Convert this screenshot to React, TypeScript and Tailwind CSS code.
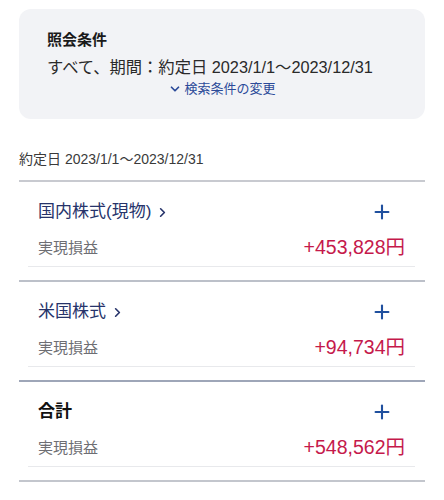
import { ChevronDown, ChevronRight, Plus } from 'lucide-react';

interface Section {
  title: string;
  link: boolean;
  value: string;
  lineColor: string;
}

const SECTIONS: Section[] = [
  { title: '国内株式(現物)', link: true, value: '+453,828円', lineColor: 'bg-[#bcc0c9]' },
  { title: '米国株式', link: true, value: '+94,734円', lineColor: 'bg-[#9ea6b8]' },
  { title: '合計', link: false, value: '+548,562円', lineColor: 'bg-[#c3c6cd]' },
];

function ResultSection({ section }: { section: Section }) {
  return (
    <div>
      <div className="pt-[15px] pb-[13px]">
        <div className="flex h-[30px] items-center justify-between pl-[19px] pr-[32px]">
          {section.link ? (
            <div className="flex items-center gap-[4px] text-[17px] text-[#26336a]">
              <span>{section.title}</span>
              <ChevronRight className="h-[15px] w-[15px]" strokeWidth={2.6} />
            </div>
          ) : (
            <div className="text-[17px] font-bold text-[#111111]">{section.title}</div>
          )}
          <Plus className="h-[22px] w-[22px] text-[#1f4f9e]" strokeWidth={2.3} />
        </div>
        <div className="mt-[6px] flex h-[30px] items-center justify-between pl-[19px] pr-[20px]">
          <span className="text-[15px] text-[#6e6e73]">実現損益</span>
          <span className="text-[19.5px] text-[#c5194b]">{section.value}</span>
        </div>
        <div className="ml-[9px] mr-[10px] mt-[3px] h-px bg-[#e8e9ec]" />
      </div>
      <div className={`h-[2px] ${section.lineColor}`} />
    </div>
  );
}

export default function App() {
  return (
    <div
      className="min-h-[500px] bg-white px-[19px] pt-[9px]"
      style={{ fontFamily: '"Liberation Sans", "Noto Sans CJK JP", sans-serif' }}
    >
      {/* 照会条件 */}
      <div className="h-[110px] rounded-[12px] bg-[#f2f3f6] px-[28px] pt-[20px]">
        <div className="text-[15px] font-bold leading-[22px] text-[#1a1a1a]">照会条件</div>
        <div className="mt-[4px] text-[16.3px] leading-[24px] text-[#2a2a2a]">
          すべて、期間：約定日 2023/1/1〜2023/12/31
        </div>
        <div className="mt-[1px] flex items-center justify-center gap-[2px] text-[13px] leading-[18px] text-[#2b4a99]">
          <ChevronDown className="h-[14px] w-[14px]" strokeWidth={3} />
          <span>検索条件の変更</span>
        </div>
      </div>

      <div className="mt-[30px] text-[14px] leading-[20px] text-[#3a3a3a]">
        約定日 2023/1/1〜2023/12/31
      </div>
      <div className="mt-[11px] h-[2px] bg-[#c8cad0]" />

      {SECTIONS.map((s) => (
        <ResultSection key={s.title} section={s} />
      ))}
    </div>
  );
}
